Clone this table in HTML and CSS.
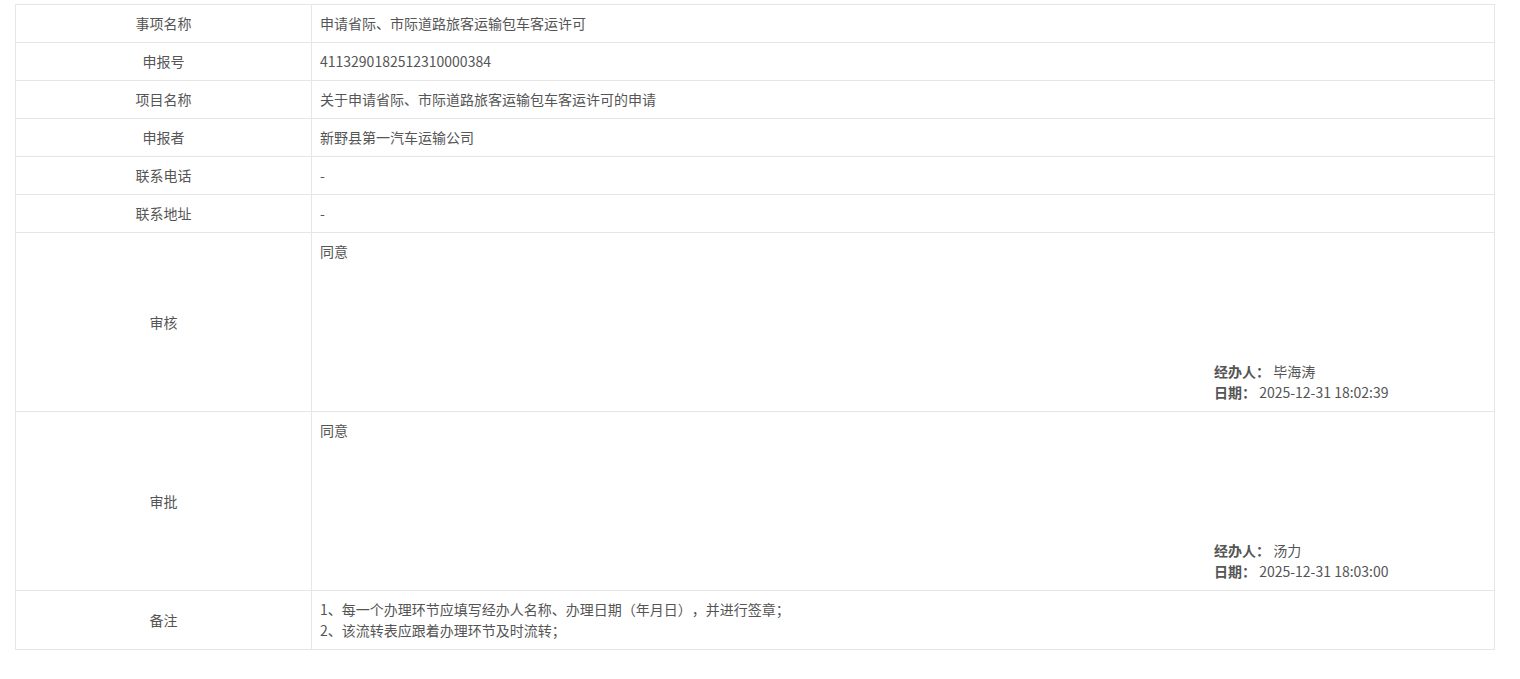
FILE: index.html
```html
<!DOCTYPE html>
<html lang="zh-CN">
<head>
<meta charset="utf-8">
<title>流转表</title>
<link rel="stylesheet" href="styles.css">
</head>
<body>
<div class="page">
  <table class="flow">
    <colgroup><col class="c-label"><col class="c-value"></colgroup>
    <tbody>
      <tr><td class="label">事项名称</td><td class="value">申请省际、市际道路旅客运输包车客运许可</td></tr>
      <tr><td class="label">申报号</td><td class="value">4113290182512310000384</td></tr>
      <tr><td class="label">项目名称</td><td class="value">关于申请省际、市际道路旅客运输包车客运许可的申请</td></tr>
      <tr><td class="label">申报者</td><td class="value">新野县第一汽车运输公司</td></tr>
      <tr><td class="label">联系电话</td><td class="value">-</td></tr>
      <tr><td class="label">联系地址</td><td class="value">-</td></tr>
      <tr>
        <td class="label">审核</td>
        <td class="value">
          <div class="opinion">
            <div class="opinion-text">同意</div>
            <div class="sign">
              <div><b>经办人：</b> 毕海涛</div>
              <div><b>日期：</b> 2025-12-31 18:02:39</div>
            </div>
          </div>
        </td>
      </tr>
      <tr>
        <td class="label">审批</td>
        <td class="value">
          <div class="opinion">
            <div class="opinion-text">同意</div>
            <div class="sign">
              <div><b>经办人：</b> 汤力</div>
              <div><b>日期：</b> 2025-12-31 18:03:00</div>
            </div>
          </div>
        </td>
      </tr>
      <tr>
        <td class="label">备注</td>
        <td class="value">1、每一个办理环节应填写经办人名称、办理日期（年月日），并进行签章；<br>2、该流转表应跟着办理环节及时流转；</td>
      </tr>
    </tbody>
  </table>
</div>
</body>
</html>
```
FILE: styles.css
```css
html, body {
  margin: 0;
  padding: 0;
  background: #fff;
}
body {
  font-family: "Microsoft YaHei", "Noto Sans CJK SC", "Noto Sans", sans-serif;
  font-size: 14px;
  color: #555;
  text-spacing-trim: space-all;
}
.page {
  padding: 4px 0 0 15px;
}
.flow {
  border-collapse: collapse;
  width: 1480px;
  table-layout: fixed;
}
.c-label { width: 296px; }
.flow td {
  border: 1px solid #e6e6e6;
  padding: 8px 8px;
  line-height: 21px;
  vertical-align: top;
}
.flow td.label {
  text-align: center;
  vertical-align: middle;
}
.flow td.value {
  padding-left: 8px;
}
.opinion {
  height: 162px;
  display: flex;
  flex-direction: column;
  justify-content: space-between;
}
.sign {
  align-self: flex-end;
  width: 272px;
}
.sign b {
  font-weight: bold;
}
```
